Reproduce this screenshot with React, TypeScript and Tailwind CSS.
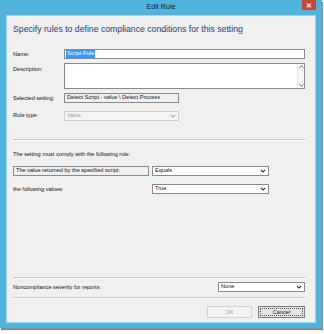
import React from "react";

const font = { fontFamily: '"Liberation Sans", Arial, sans-serif' };

function Chevron({ color = "#333" }: { color?: string }) {
  return (
    <svg width="6" height="4" viewBox="0 0 6 4">
      <path d="M0.8 0.8 L3 3 L5.2 0.8" fill="none" stroke={color} strokeWidth="1.1" />
    </svg>
  );
}

function Combo({ text, w, disabled }: { text: string; w: string; disabled?: boolean }) {
  return (
    <div
      className={`${w} h-[10px] flex items-center justify-between pl-[2px] pr-[2px] border ${
        disabled ? "border-[#cfcfcf] bg-[#f4f4f4] text-[#9a9a9a]" : "border-[#8a8a8a] bg-white text-[#111]"
      } text-[5.6px] leading-none`}
    >
      <span>{text}</span>
      <Chevron color={disabled ? "#aaa" : "#333"} />
    </div>
  );
}

function Separator() {
  return (
    <div className="flex flex-col">
      <div className="h-px bg-[#c8c8c8]" />
      <div className="h-px bg-white" />
    </div>
  );
}

export default function App() {
  return (
    <div className="w-[324px] h-[334px] bg-white" style={font}>
      <div className="w-[322px] h-[328px] bg-[#4fb3dc] flex flex-col px-[6px] pb-[5px] shadow-[1px_2px_1px_rgba(0,0,0,0.45)]">
        {/* title bar */}
        <div className="h-[15px] flex items-start shrink-0">
          <div className="w-[14px]" />
          <div className="flex-1 h-[15px] flex items-center justify-center text-[7.2px] text-[#1a1a1a]">Edit Rule</div>
          <div className="w-[14px] h-[10px] bg-[#c9463d] flex items-center justify-center text-white text-[7px] font-bold leading-none">
            ✕
          </div>
        </div>
        {/* content */}
        <div className="flex-1 bg-[#f0f0f0] flex flex-col pl-[5px] pr-[10px] pt-[8px] pb-[4px] border border-[#9fd4ea]">
          <div className="h-[11px] flex items-center pl-px text-[8.7px] text-[#1f3d6e] leading-none">
            Specify rules to define compliance conditions for this setting
          </div>
          {/* Name */}
          <div className="mt-[14px] flex items-center h-[10px]">
            <div className="w-[52px] pl-px text-[5.6px] text-[#111]">Name:</div>
            <div className="flex-1 h-[10px] bg-white border border-[#8a8a8a] flex items-center pl-px">
              <span className="bg-[#3399ff] text-white text-[5.6px] leading-none px-[1px] py-[1px]">Script Rule</span>
            </div>
          </div>
          {/* Description */}
          <div className="mt-[4px] flex items-start h-[26px]">
            <div className="w-[52px] pl-px text-[5.6px] text-[#111] pt-[2px]">Description:</div>
            <div className="flex-1 h-[26px] bg-white border border-[#8a8a8a] flex justify-end">
              <div className="w-[7px] h-full flex flex-col items-center justify-between py-px border-l border-[#e6e6e6] bg-[#f7f7f7]">
                <svg width="5" height="3" viewBox="0 0 5 3"><path d="M0.5 2.5 L2.5 0.5 L4.5 2.5" fill="none" stroke="#666" strokeWidth="0.9" /></svg>
                <svg width="5" height="3" viewBox="0 0 5 3"><path d="M0.5 0.5 L2.5 2.5 L4.5 0.5" fill="none" stroke="#666" strokeWidth="0.9" /></svg>
              </div>
            </div>
          </div>
          {/* Selected setting */}
          <div className="mt-[4px] flex items-center h-[10px]">
            <div className="w-[52px] pl-px text-[5.6px] text-[#111]">Selected setting:</div>
            <div className="w-[115px] h-[10px] bg-[#f0f0f0] border border-[#8a8a8a] flex items-center pl-[2px] text-[5.6px] text-[#111] leading-none">
              Detect Script - value \ Detect Process
            </div>
          </div>
          {/* Rule type */}
          <div className="mt-[7px] flex items-center h-[11px]">
            <div className="w-[52px] pl-px text-[5.6px] text-[#111]">Rule type:</div>
            <Combo text="Value" w="w-[115px]" disabled />
          </div>
          <div className="mt-[18px] pl-px">
            <Separator />
          </div>
          <div className="mt-[9px] h-[8px] pl-px flex items-center text-[5.6px] text-[#111]">
            The setting must comply with the following rule:
          </div>
          <div className="mt-[8px] pl-px flex items-center h-[10px] gap-[3px]">
            <div className="w-[136px] h-[10px] bg-[#f0f0f0] border border-[#8a8a8a] flex items-center pl-[2px] text-[5.6px] text-[#111] leading-none">
              The value returned by the specified script:
            </div>
            <Combo text="Equals" w="w-[117px]" />
          </div>
          <div className="mt-[8px] pl-px flex items-center h-[10px] gap-[3px]">
            <div className="w-[136px] text-[5.6px] text-[#111]">the following values:</div>
            <Combo text="True" w="w-[117px]" />
          </div>
          <div className="flex-1" />
          <div className="pl-px">
            <Separator />
          </div>
          <div className="mt-[3px] pl-px flex items-center h-[10px] justify-between">
            <div className="text-[5.6px] text-[#111]">Noncompliance severity for reports:</div>
            <Combo text="None" w="w-[87px]" />
          </div>
          <div className="mt-[5px] pl-px">
            <Separator />
          </div>
          <div className="mt-[7px] flex justify-end gap-[6px] h-[12px]">
            <div className="w-[45px] h-[12px] border border-[#d3d3d3] bg-[#f4f4f4] flex items-center justify-center text-[5.6px] text-[#a0a0a0]">
              OK
            </div>
            <div className="w-[47px] h-[12px] border border-[#7a7a7a] bg-[#e5e5e5] flex items-center justify-center p-px">
              <div className="w-full h-full border border-dotted border-[#555] flex items-center justify-center text-[5.6px] text-[#111]">
                Cancel
              </div>
            </div>
          </div>
        </div>
      </div>
    </div>
  );
}
